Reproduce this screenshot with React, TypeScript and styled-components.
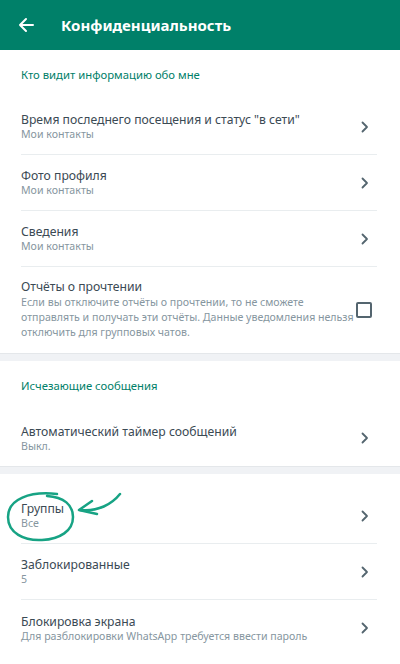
import styled, { createGlobalStyle } from 'styled-components';

const GlobalStyle = createGlobalStyle`
    html, body {
        margin: 0;
        padding: 0;
        background: #ffffff;
    }
    body {
        font-family: 'Noto Sans', 'Liberation Sans', sans-serif;
    }
`;

type Item = { title: string; subtitle: string; marked?: boolean };

const whoSees: Item[] = [
    { title: 'Время последнего посещения и статус "в сети"', subtitle: 'Мои контакты' },
    { title: 'Фото профиля', subtitle: 'Мои контакты' },
    { title: 'Сведения', subtitle: 'Мои контакты' },
];

const others: Item[] = [
    { title: 'Группы', subtitle: 'Все', marked: true },
    { title: 'Заблокированные', subtitle: '5' },
    { title: 'Блокировка экрана', subtitle: 'Для разблокировки WhatsApp требуется ввести пароль' },
];

function Chevron() {
    return (
        <ChevronBox>
            <svg width="8" height="12" viewBox="0 0 8 12">
                <path d="M1.5 1.5L6 6l-4.5 4.5" fill="none" stroke="#54656f" strokeWidth="1.8" strokeLinecap="round" strokeLinejoin="round" />
            </svg>
        </ChevronBox>
    );
}

// hand-drawn highlight around the "Группы" row
function Marker() {
    return (
        <MarkerSvg width="130" height="56" viewBox="0 0 130 56">
            <path
                d="M57 3 C30 0 8 8 8 26 C8 42 24 50 42 49 C60 48 73 40 73 26 C73 14 64 6 47 5"
                fill="none" stroke="#17a384" strokeWidth="2.5" strokeLinecap="round"
            />
            <path d="M80 19 C98 21 112 13 120 3" fill="none" stroke="#17a384" strokeWidth="2.5" strokeLinecap="round" />
            <path d="M92 10 L79 19 L97 23" fill="none" stroke="#17a384" strokeWidth="2.5" strokeLinecap="round" strokeLinejoin="round" />
        </MarkerSvg>
    );
}

function Row({ item }: { item: Item }) {
    return (
        <RowBox>
            <TextCol>
                <Title>{item.title}</Title>
                <Subtitle>{item.subtitle}</Subtitle>
            </TextCol>
            <Chevron />
            {item.marked && <Marker />}
        </RowBox>
    );
}

export default function App() {
    return (
        <Page>
            <GlobalStyle />
            <Header>
                <BackButton>
                    <svg width="16" height="16" viewBox="0 0 16 16">
                        <path d="M15 8H2M8 2L2 8l6 6" fill="none" stroke="#ffffff" strokeWidth="2" strokeLinecap="round" strokeLinejoin="round" />
                    </svg>
                </BackButton>
                <HeaderTitle>Конфиденциальность</HeaderTitle>
            </Header>

            <Section>
                <SectionTitle>Кто видит информацию обо мне</SectionTitle>
                {whoSees.map((item) => (
                    <Row key={item.title} item={item} />
                ))}
                <RowBox $tall>
                    <TextCol>
                        <Title>Отчёты о прочтении</Title>
                        <Description>
                            Если вы отключите отчёты о прочтении, то не сможете<br />
                            отправлять и получать эти отчёты. Данные уведомления нельзя<br />
                            отключить для групповых чатов.
                        </Description>
                    </TextCol>
                    <Checkbox />
                </RowBox>
            </Section>

            <Band />

            <Section>
                <SectionTitle>Исчезающие сообщения</SectionTitle>
                <Row item={{ title: 'Автоматический таймер сообщений', subtitle: 'Выкл.' }} />
            </Section>

            <Band />

            <Section $padTop>
                {others.map((item) => (
                    <Row key={item.title} item={item} />
                ))}
            </Section>
        </Page>
    );
}

const Page = styled.div`
    width: 400px;
    height: 664px;
    overflow: hidden;
    background: #ffffff;
    display: flex;
    flex-direction: column;
`;

const Header = styled.div`
    height: 50px;
    flex-shrink: 0;
    background: #008069;
    display: flex;
    align-items: center;
    padding-left: 18px;
    box-sizing: border-box;
`;

const BackButton = styled.div`
    width: 16px;
    height: 16px;
    display: flex;
    margin-right: 27px;
`;

const HeaderTitle = styled.div`
    color: #ffffff;
    font-size: 15px;
    font-weight: 700;
`;

const Section = styled.div<{ $padTop?: boolean }>`
    display: flex;
    flex-direction: column;
    padding-top: ${(p) => (p.$padTop ? '14px' : '0')};
`;

const SectionTitle = styled.div`
    height: 49px;
    display: flex;
    align-items: center;
    padding-left: 21px;
    font-size: 11.3px;
    color: #008069;
`;

const RowBox = styled.div<{ $tall?: boolean }>`
    position: relative;
    display: flex;
    align-items: center;
    margin-left: 21px;
    margin-right: 23px;
    min-height: 56px;
    padding: ${(p) => (p.$tall ? '12px 0 13px' : '0')};
    box-sizing: border-box;
    border-bottom: 1px solid #e9edef;

    &:last-child {
        border-bottom: none;
    }
`;

const TextCol = styled.div`
    flex: 1;
    display: flex;
    flex-direction: column;
    min-width: 0;
`;

const Title = styled.div`
    font-size: 12.2px;
    line-height: 16px;
    color: #3b4a54;
`;

const Subtitle = styled.div`
    font-size: 10.6px;
    line-height: 13px;
    color: #8696a0;
`;

const Description = styled(Subtitle)`
    line-height: 15px;
    white-space: nowrap;
`;

const ChevronBox = styled.div`
    width: 8px;
    height: 12px;
    display: flex;
    margin-right: 8px;
`;

const Checkbox = styled.div`
    width: 16px;
    height: 16px;
    box-sizing: border-box;
    border: 2px solid #54656f;
    border-radius: 2px;
    margin-right: 5px;
    flex-shrink: 0;
`;

const Band = styled.div`
    height: 8px;
    flex-shrink: 0;
    background: #f0f2f5;
    border-top: 1px solid #e4e7ea;
    box-sizing: border-box;
`;

const MarkerSvg = styled.svg`
    position: absolute;
    left: -21px;
    top: 3px;
    pointer-events: none;
`;
